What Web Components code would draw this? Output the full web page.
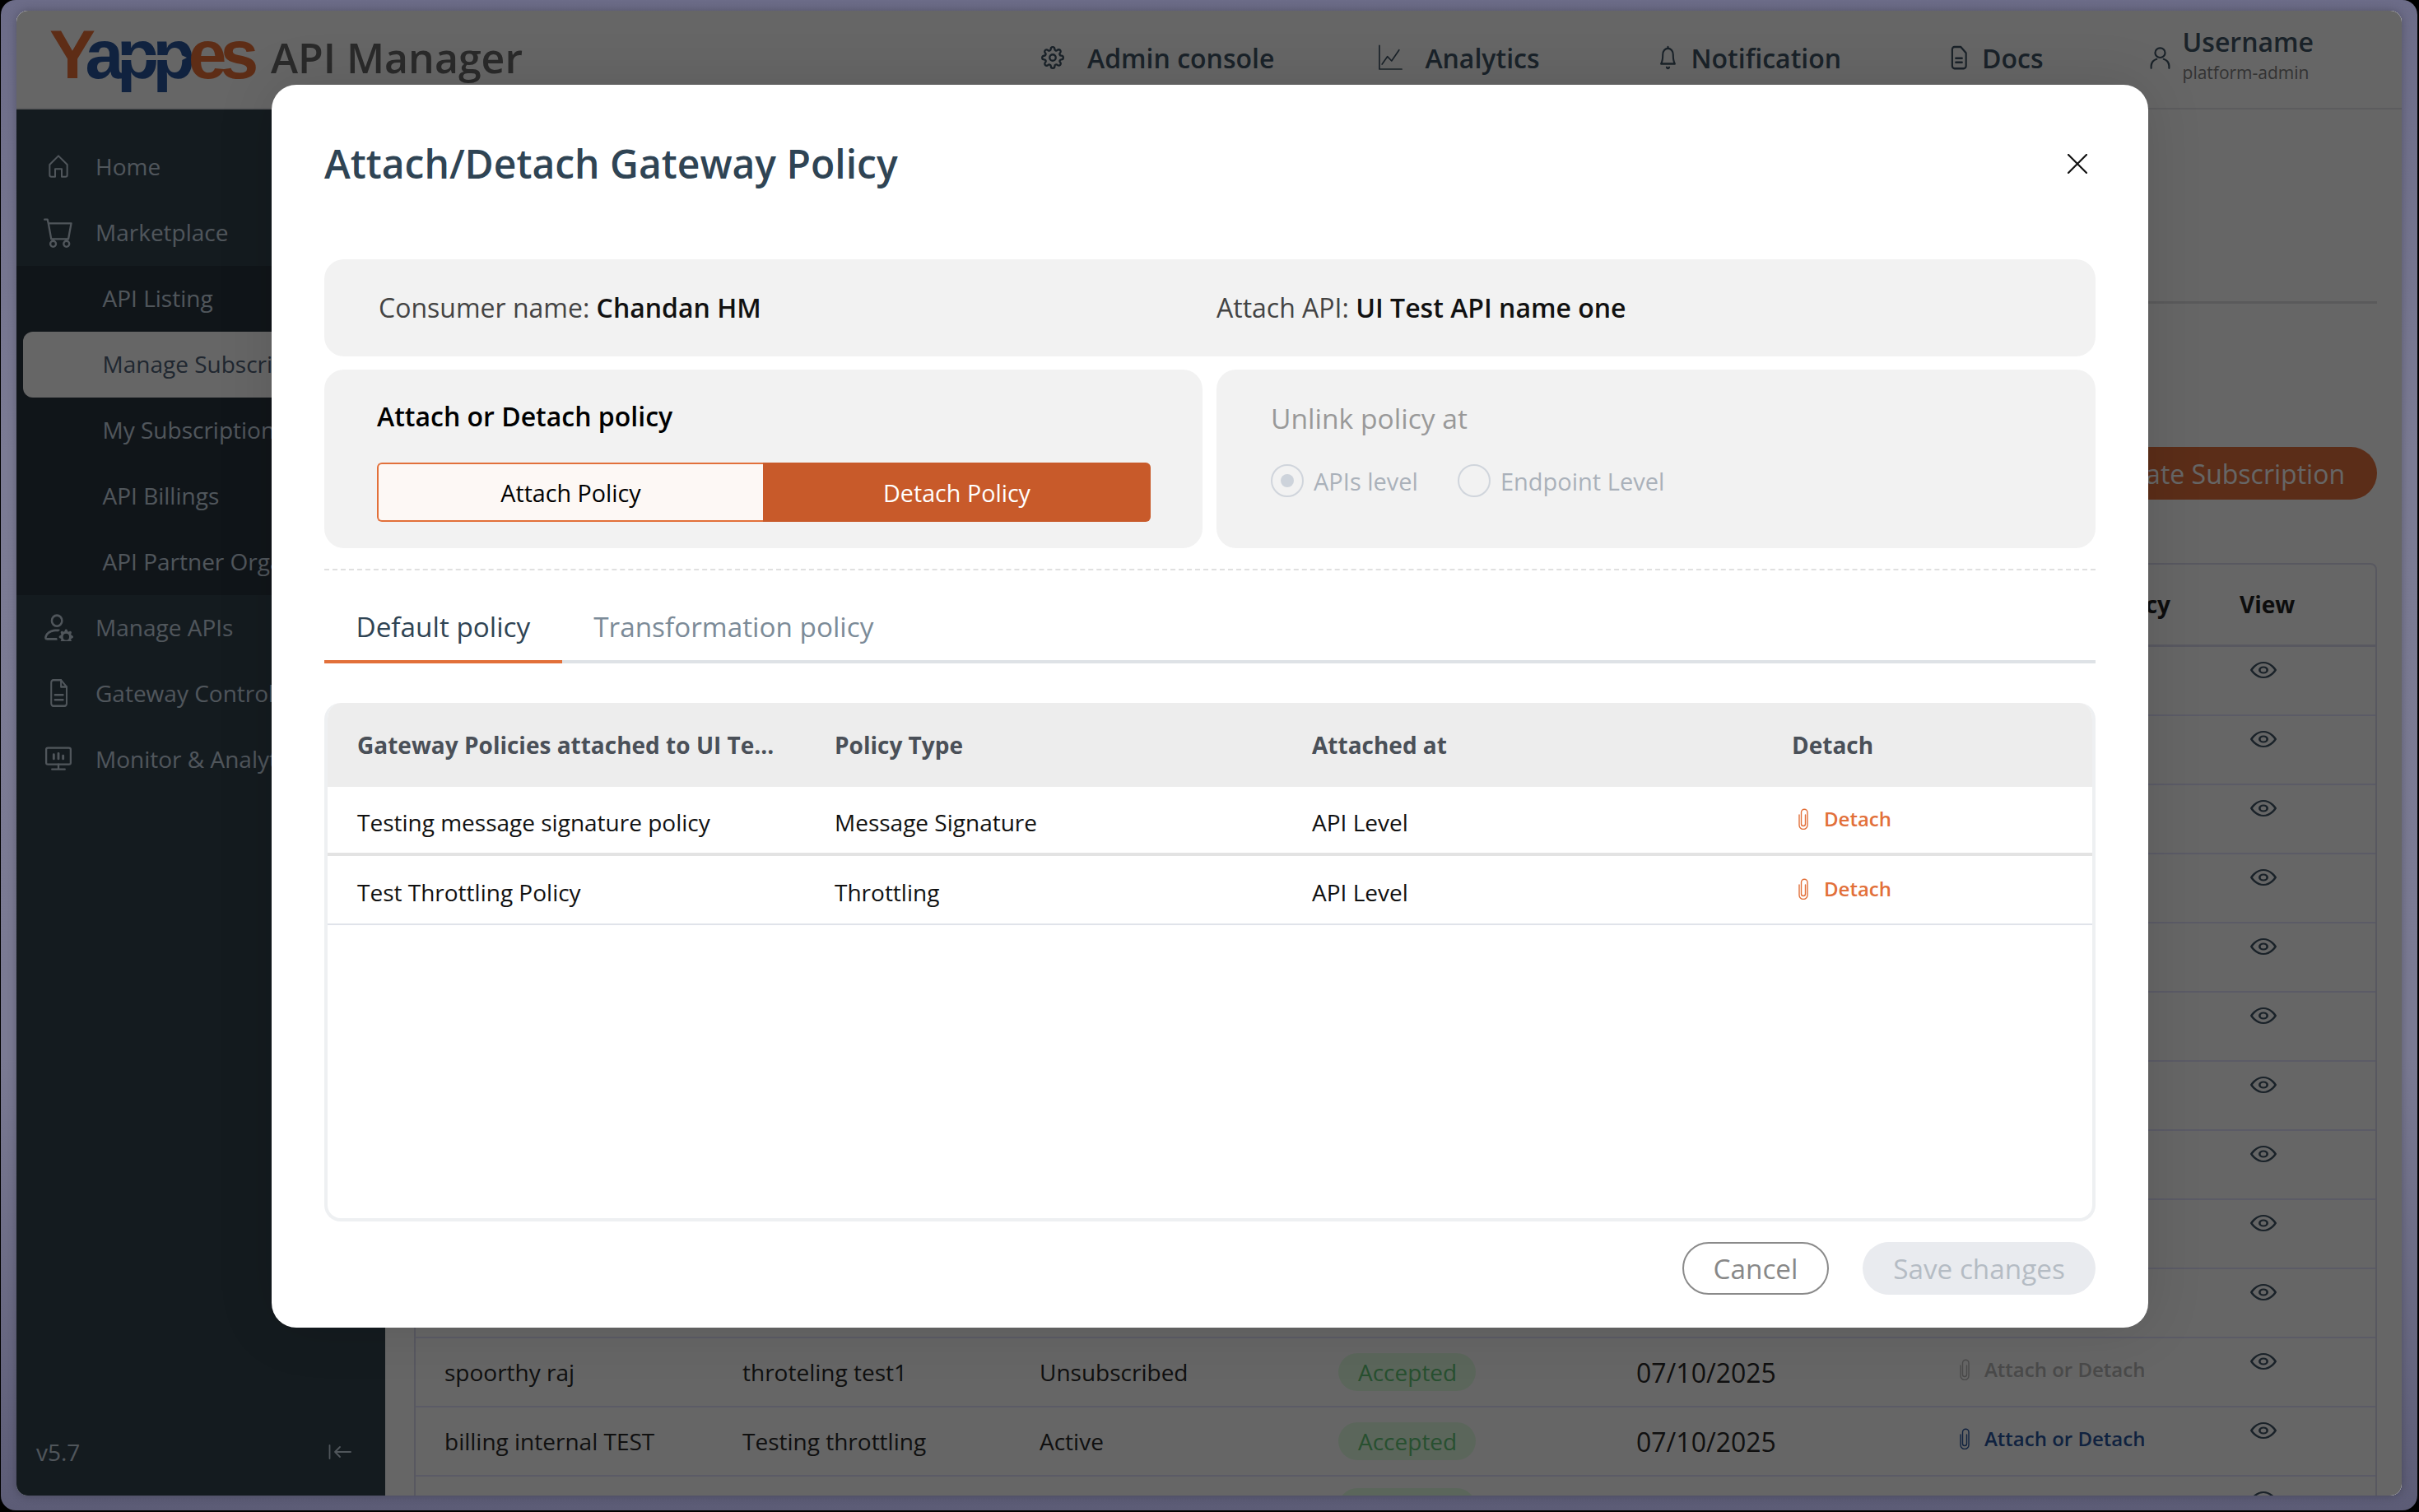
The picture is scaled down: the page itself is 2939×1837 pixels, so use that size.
<!DOCTYPE html>
<html>
<head>
<meta charset="utf-8">
<title>Yappes API Manager</title>
<style>
  html, body { margin: 0; padding: 0; background: #000; overflow: hidden; }
  body { font-family: "Open Sans", "Noto Sans", sans-serif; }
</style>
</head>
<body>
<app-frame>
  <app-topbar slot="top"></app-topbar>
  <side-nav slot="side"></side-nav>
  <subscription-page slot="main"></subscription-page>
  <policy-modal slot="modal"></policy-modal>
</app-frame>

<script>
const ICONS = {
  home: '<path fill="none" stroke="currentColor" stroke-width="1.5" stroke-linejoin="round" d="M4 10.5 12 2.5l8 8V20a1.5 1.5 0 0 1-1.5 1.5H15V14.5H9v7H5.5A1.5 1.5 0 0 1 4 20z"/>',
  cart: '<path fill="currentColor" d="M0 1.5A.5.5 0 0 1 .5 1H2a.5.5 0 0 1 .485.379L2.89 3H14.5a.5.5 0 0 1 .491.592l-1.5 8A.5.5 0 0 1 13 12H4a.5.5 0 0 1-.491-.408L2.01 3.607 1.61 2H.5a.5.5 0 0 1-.5-.5zM3.102 4l1.313 7h8.17l1.313-7H3.102zM5 12a2 2 0 1 0 0 4 2 2 0 0 0 0-4zm7 0a2 2 0 1 0 0 4 2 2 0 0 0 0-4zm-7 1a1 1 0 1 1 0 2 1 1 0 0 1 0-2zm7 0a1 1 0 1 1 0 2 1 1 0 0 1 0-2z"/>',
  persongear: '<path fill="currentColor" d="M11 5a3 3 0 1 1-6 0 3 3 0 0 1 6 0ZM8 7a2 2 0 1 0 0-4 2 2 0 0 0 0 4Zm.256 7a4.474 4.474 0 0 1-.229-1.004H3c.001-.246.154-.986.832-1.664C4.484 10.68 5.711 10 8 10c.26 0 .507.009.74.025.226-.341.496-.65.804-.918C9.077 9.038 8.564 9 8 9c-5 0-6 3-6 4s1 1 1 1h5.256Zm3.63-4.54c.18-.613 1.048-.613 1.229 0l.043.148a.64.64 0 0 0 .921.382l.136-.074c.561-.306 1.175.308.87.869l-.075.136a.64.64 0 0 0 .382.92l.149.045c.612.18.612 1.048 0 1.229l-.15.043a.64.64 0 0 0-.38.921l.074.136c.305.561-.309 1.175-.87.87l-.136-.075a.64.64 0 0 0-.92.382l-.045.149c-.18.612-1.048.612-1.229 0l-.043-.15a.64.64 0 0 0-.921-.38l-.136.074c-.561.305-1.175-.309-.87-.87l.075-.136a.64.64 0 0 0-.382-.92l-.148-.044c-.613-.181-.613-1.049 0-1.23l.148-.043a.64.64 0 0 0 .382-.921l-.074-.136c-.306-.561.308-1.175.869-.87l.136.075a.64.64 0 0 0 .92-.382l.045-.148ZM14 12.5a1.5 1.5 0 1 0-3 0 1.5 1.5 0 0 0 3 0Z"/>',
  file: '<g fill="none" stroke="currentColor" stroke-width="1.6" stroke-linecap="round" stroke-linejoin="round"><path d="M7 1.5h7.5L20 7v13.5a2 2 0 0 1-2 2H7a2 2 0 0 1-2-2v-17a2 2 0 0 1 2-2z"/><path d="M14.5 1.5V7H20"/><path d="M8.5 13.5h8M8.5 17.5h8"/></g>',
  monitor: '<g fill="none" stroke="currentColor" stroke-width="1.6" stroke-linecap="round" stroke-linejoin="round"><rect x="1.5" y="2" width="21" height="15" rx="1.5"/><path d="M12 17v4M6.5 21.5h11"/><path stroke-width="2" d="M8 8v4M12 7v5M16 9v3"/></g>',
  gear: '<g fill="none" stroke="currentColor" stroke-width="2" stroke-linecap="round" stroke-linejoin="round"><circle cx="12" cy="12" r="3.2"/><path d="M19.4 15a1.65 1.65 0 0 0 .33 1.82l.06.06a2 2 0 0 1 0 2.83 2 2 0 0 1-2.83 0l-.06-.06a1.65 1.65 0 0 0-1.82-.33 1.65 1.65 0 0 0-1 1.51V21a2 2 0 0 1-2 2 2 2 0 0 1-2-2v-.09A1.65 1.65 0 0 0 9 19.4a1.65 1.65 0 0 0-1.82.33l-.06.06a2 2 0 0 1-2.83 0 2 2 0 0 1 0-2.83l.06-.06a1.65 1.65 0 0 0 .33-1.82 1.65 1.65 0 0 0-1.51-1H3a2 2 0 0 1-2-2 2 2 0 0 1 2-2h.09A1.65 1.65 0 0 0 4.6 9a1.65 1.65 0 0 0-.33-1.82l-.06-.06a2 2 0 0 1 0-2.83 2 2 0 0 1 2.83 0l.06.06a1.65 1.65 0 0 0 1.82.33H9a1.65 1.65 0 0 0 1-1.51V3a2 2 0 0 1 2-2 2 2 0 0 1 2 2v.09a1.65 1.65 0 0 0 1 1.51 1.65 1.65 0 0 0 1.82-.33l.06-.06a2 2 0 0 1 2.83 0 2 2 0 0 1 0 2.83l-.06.06a1.65 1.65 0 0 0-.33 1.82V9a1.65 1.65 0 0 0 1.51 1H21a2 2 0 0 1 2 2 2 2 0 0 1-2 2h-.09a1.65 1.65 0 0 0-1.51 1z"/></g>',
  chart: '<g fill="none" stroke="currentColor" stroke-width="1.3" stroke-linecap="round" stroke-linejoin="round"><path d="M1.5 1v21.5h21"/><path d="M4 18l5-7 4 4 7-10"/></g>',
  bell: '<g fill="none" stroke="currentColor" stroke-width="2" stroke-linecap="round" stroke-linejoin="round"><path d="M18 9a6 6 0 0 0-12 0c0 6-2 9-2 9h16s-2-3-2-9"/><path d="M12 1.5V3M10.5 21.5a1.7 1.7 0 0 0 3 0"/></g>',
  doc: '<g fill="none" stroke="currentColor" stroke-width="2" stroke-linecap="round" stroke-linejoin="round"><path d="M7 1.5h7l6 6V20a2.5 2.5 0 0 1-2.5 2.5H7A2.5 2.5 0 0 1 4.5 20V4A2.5 2.5 0 0 1 7 1.5z"/><path d="M8.5 12.5h7M8.5 16.5h7"/></g>',
  user: '<g fill="none" stroke="currentColor" stroke-width="1.8" stroke-linecap="round" stroke-linejoin="round"><circle cx="12" cy="7" r="5"/><path d="M3 23v-2.5a8 8 0 0 1 5.5-7M21 23v-2.5a8 8 0 0 0-5.5-7"/></g>',
  eye: '<g fill="none" stroke="currentColor" stroke-width="2" stroke-linecap="round" stroke-linejoin="round"><path d="M1 12s4-9 11-9 11 9 11 9-4 9-11 9-11-9-11-9z"/><circle cx="12" cy="12" r="3.5"/></g>',
  clip: '<path fill="none" stroke="currentColor" stroke-width="1.4" stroke-linecap="round" d="M1 8v12.5a5 5 0 0 0 10 0V5a3.75 3.75 0 0 0-7.5 0v14a2.5 2.5 0 0 0 5 0V8"/>',
  collapse: '<g fill="none" stroke="currentColor" stroke-width="1.8" stroke-linecap="round" stroke-linejoin="round"><path d="M1.5 1v16M27 9H8M14 3 8 9l6 6"/></g>',
  close: '<path fill="none" stroke="currentColor" stroke-width="2.2" stroke-linecap="round" d="M1 1l22 22M23 1 1 23"/>'
};

function svgIcon(name, w, h, box) {
  return `<svg width="${w}" height="${h}" viewBox="${box || '0 0 24 24'}" preserveAspectRatio="none" style="display:block;flex:none">${ICONS[name]}</svg>`;
}

class AppFrame extends HTMLElement {
  constructor() {
    super();
    this.root = this.attachShadow({ mode: 'open' });
    this.root.innerHTML = `<style>
      :host {
        display: block;
        box-sizing: border-box;
        width: 2936px;
        height: 1835px;
        margin-left: 1px;
        padding: 13px 19px 18px 19px;
        border-radius: 18px;
        background: linear-gradient(180deg, #6c6c88 0%, #7b7b94 30%, #7a7a93 70%, #5c5c76 100%);
      }
      #window {
        position: relative;
        width: 2898px;
        height: 1804px;
        overflow: hidden;
        border-radius: 14px;
        display: grid;
        grid-template-columns: 448px 1fr;
        grid-template-rows: 120px 1fr;
        box-shadow: 0 0 12px rgba(0,0,0,.25);
        background: #fff;
      }
      #top { grid-column: 1 / 3; }
      #backdrop { position: absolute; inset: 0; background: rgba(0,0,0,.6); }
      </style>
      <div id="window">
        <div id="top"><slot name="top"></slot></div>
        <slot name="side"></slot>
        <slot name="main"></slot>
        <div id="backdrop"></div>
        <slot name="modal"></slot>
      </div>`;
  }
}
customElements.define('app-frame', AppFrame);

class TopLink extends HTMLElement {
  constructor() {
    super();
    this.root = this.attachShadow({ mode: 'open' });
    this.root.innerHTML = `<style>
      :host { display: flex; align-items: center; color: #415566; font-size: 32px; font-weight: 600; white-space: nowrap; }
      </style>
      <slot name="icon"></slot><span id="gap"></span><slot></slot>`;
  }
  connectedCallback() {
    this.root.querySelector('#gap').style.width = (this.getAttribute('gap') || 16) + 'px';
  }
}
customElements.define('top-link', TopLink);

class AppTopbar extends HTMLElement {
  constructor() {
    super();
    this.root = this.attachShadow({ mode: 'open' });
    this.root.innerHTML = `<style>
      :host {
        display: flex;
        align-items: center;
        box-sizing: border-box;
        height: 120px;
        border-bottom: 2px solid #e6e6ea;
        background: #fff;
      }
      #logo {
        position: relative;
        margin: 0 0 12px 40px;
        width: 250px;
        height: 78px;
        font-family: "Liberation Sans", Arial, sans-serif;
        font-weight: 700;
        font-size: 84px;
        line-height: 78px;
        letter-spacing: -8px;
        white-space: nowrap;
        color: #eb7139;
      }
      #logo b { color: #28569f; font-weight: 700; }
      #logo svg { position: absolute; left: 0; top: 0; }
      #name {
        margin: 0 0 4px 19px;
        color: #696969;
        font-size: 50px;
        font-weight: 600;
        white-space: nowrap;
        line-height: 66px;
      }
      #links { display: flex; align-items: center; margin: 0 0 4px 630px; }
      #user { padding-bottom: 8px; }
      #user div:first-child { line-height: 44px; }
      #user div:last-child { font-size: 21px; line-height: 30px; font-weight: 500; color: #808080; }
      </style>
      <div id="logo">Y<b>app</b>es<svg width="250" height="78" viewBox="0 0 250 78"><path fill="#fff" d="M87 40h66v6H87z"/><path fill="#fff" d="M150 35l17 8-17 9z"/></svg></div>
      <div id="name">API Manager</div>
      <div id="links">
        <top-link gap="28"><span slot="icon">${svgIcon('gear', 28, 28)}</span>Admin console</top-link>
        <top-link gap="26" style="margin-left:126px"><span slot="icon">${svgIcon('chart', 31, 32)}</span>Analytics</top-link>
        <top-link gap="16" style="margin-left:143px"><span slot="icon">${svgIcon('bell', 25, 30)}</span>Notification</top-link>
        <top-link gap="15" style="margin-left:130px"><span slot="icon">${svgIcon('doc', 26, 30)}</span>Docs</top-link>
        <top-link gap="13" style="margin-left:127px"><span slot="icon">${svgIcon('user', 29, 28)}</span><div id="user"><div>Username</div><div>platform-admin</div></div></top-link>
      </div>`;
  }
}
customElements.define('app-topbar', AppTopbar);

class NavItem extends HTMLElement {
  constructor() {
    super();
    this.root = this.attachShadow({ mode: 'open' });
    this.root.innerHTML = `<style>
      :host {
        display: flex;
        align-items: center;
        box-sizing: border-box;
        height: 80px;
        padding-bottom: 2px;
        font-size: 28px;
        color: #c8d7e4;
        white-space: nowrap;
      }
      :host([sub]) { padding-left: 104.5px; }
      :host([active]) { margin-left: 8px; padding-left: 96.5px; background: #fff; border-radius: 12px; color: #506278; }
      #icon { width: 96px; display: flex; justify-content: center; box-sizing: border-box; padding-left: 6px; }
      :host([sub]) #icon { display: none; }
      </style>
      <span id="icon"><slot name="icon"></slot></span><slot></slot>`;
  }
}
customElements.define('nav-item', NavItem);

class SideNav extends HTMLElement {
  constructor() {
    super();
    this.root = this.attachShadow({ mode: 'open' });
    this.root.innerHTML = `<style>
      :host {
        display: flex;
        flex-direction: column;
        background: #33444f;
        padding-top: 30px;
        overflow: hidden;
      }
      #sub { background: #2a3540; }
      #foot {
        margin-top: auto;
        display: flex;
        align-items: center;
        justify-content: space-between;
        padding: 0 41px 34px 24px;
        font-size: 28px;
        line-height: 38px;
        color: #c8d7e4;
      }
      nav-item svg { color: #c8d7e4; }
      </style>
      <nav-item><span slot="icon">${svgIcon('home', 32, 32)}</span>Home</nav-item>
      <nav-item><span slot="icon">${svgIcon('cart', 37, 38, '0 0 16 16')}</span>Marketplace</nav-item>
      <div id="sub">
        <nav-item sub>API Listing</nav-item>
        <nav-item sub active>Manage Subscriptions</nav-item>
        <nav-item sub>My Subscriptions</nav-item>
        <nav-item sub>API Billings</nav-item>
        <nav-item sub>API Partner Organizations</nav-item>
      </div>
      <nav-item><span slot="icon">${svgIcon('persongear', 36, 34, '1.5 1.5 14.5 13')}</span>Manage APIs</nav-item>
      <nav-item><span slot="icon">${svgIcon('file', 30, 36)}</span>Gateway Controls</nav-item>
      <nav-item><span slot="icon">${svgIcon('monitor', 34, 32)}</span>Monitor &amp; Analytics</nav-item>
      <div id="foot"><span>v5.7</span>${svgIcon('collapse', 28, 18, '0 0 28 18')}</div>`;
  }
}
customElements.define('side-nav', SideNav);

class SubscriptionRow extends HTMLElement {
  constructor() {
    super();
    this.root = this.attachShadow({ mode: 'open' });
    const g = n => this.getAttribute(n) || '';
    const link = g('link');
    this.root.innerHTML = `<style>
      :host {
        display: grid;
        grid-template-columns: 362px 361px 363px 362px 388px 346px 1fr;
        align-items: center;
        box-sizing: border-box;
        height: 84px;
        padding: 0 0 0 35px;
        border-bottom: 2px solid #e4e4ff;
        font-size: 28px;
        color: #2a2a2a;
        white-space: nowrap;
      }
      #pill {
        display: inline-flex;
        align-items: center;
        box-sizing: border-box;
        width: 167px;
        height: 46px;
        padding-left: 24px;
        border-radius: 23px;
        background: #e4ffe4;
        color: #64c878;
      }
      #date { font-size: 32px; }
      #link { display: flex; align-items: center; gap: 18px; margin: 0 0 7px 5px; font-size: 24px; font-weight: 600; }
      #eye { margin: 0 0 27px 12px; color: #415566; }
      </style>
      <span>${g('consumer')}</span>
      <span>${g('api')}</span>
      <span>${g('status')}</span>
      <span>${this.hasAttribute('pill') ? `<span id="pill">${g('pill')}</span>` : ''}</span>
      <span id="date">${g('date')}</span>
      <span>${link ? `<span id="link" style="color:${g('link-color')}">${svgIcon('clip', 12, 26, '0 0 12 26')}${link}</span>` : ''}</span>
      <span id="eye">${svgIcon('eye', 32, 24)}</span>`;
  }
}
customElements.define('subscription-row', SubscriptionRow);

class SubscriptionPage extends HTMLElement {
  constructor() {
    super();
    this.root = this.attachShadow({ mode: 'open' });
    this.root.innerHTML = `<style>
      :host {
        display: block;
        box-sizing: border-box;
        padding: 0 30px 0 35px;
        overflow: hidden;
        background: #fff;
        height: 1684px;
      }
      #tabs { height: 233px; border-bottom: 3px solid #e0e0e4; }
      #actions { display: flex; justify-content: flex-end; margin-top: 174px; }
      button {
        height: 64px;
        padding: 0 39px;
        border: 0;
        border-radius: 32px;
        background: #e4703c;
        color: #fff;
        font: 500 32px "Open Sans", sans-serif;
      }
      #table { margin-top: 77px; border: 2px solid #dcdcf0; border-bottom: 0; border-radius: 8px 8px 0 0; }
      #head {
        display: grid;
        grid-template-columns: 1447px 1fr 165px;
        box-sizing: content-box;
        height: 95px;
        padding: 0 0 2px 33px;
        align-items: center;
        border-bottom: 3px solid #dcdcf0;
        font-size: 28px;
        font-weight: 700;
        color: #222;
      }
      #head span { text-align: right; }
      </style>
      <div id="tabs"></div>
      <div id="actions"><button>Create Subscription</button></div>
      <div id="table">
        <div id="head"><span></span><span style="margin-right:84px">Policy</span><span style="text-align:left">View</span></div>
        <div id="rows"></div>
      </div>`;
    let rows = '';
    for (let i = 0; i < 10; i++) rows += '<subscription-row></subscription-row>';
    rows += '<subscription-row consumer="spoorthy raj" api="throteling test1" status="Unsubscribed" pill="Accepted" date="07/10/2025" link="Attach or Detach" link-color="#b8b8b8"></subscription-row>';
    rows += '<subscription-row consumer="billing internal TEST" api="Testing throttling" status="Active" pill="Accepted" date="07/10/2025" link="Attach or Detach" link-color="#28569f"></subscription-row>';
    rows += '<subscription-row pill=""></subscription-row>';
    this.root.querySelector('#rows').innerHTML = rows;
  }
}
customElements.define('subscription-page', SubscriptionPage);

class RadioOption extends HTMLElement {
  constructor() {
    super();
    this.root = this.attachShadow({ mode: 'open' });
    this.root.innerHTML = `<style>
      :host { display: flex; align-items: center; gap: 12px; font-size: 29px; color: #aab1ba; white-space: nowrap; }
      #dot { box-sizing: border-box; width: 40px; height: 40px; border: 2px solid #d0d5dc; border-radius: 50%; display: flex; align-items: center; justify-content: center; }
      :host([checked]) #dot::after { content: ""; width: 16px; height: 16px; border-radius: 50%; background: #cdd3db; }
      </style>
      <span id="dot"></span><slot></slot>`;
  }
}
customElements.define('radio-option', RadioOption);

class PolicyTable extends HTMLElement {
  constructor() {
    super();
    this.root = this.attachShadow({ mode: 'open' });
    const detach = `<span class="detach">${svgIcon('clip', 12, 26, '0 0 12 26')}Detach</span>`;
    this.root.innerHTML = `<style>
      :host {
        display: block;
        box-sizing: border-box;
        height: 630px;
        border: 4px solid #eef0f2;
        border-top: 0;
        border-radius: 20px;
        overflow: hidden;
        font-size: 28px;
        color: #111;
      }
      .row {
        display: grid;
        grid-template-columns: 580px 580px 583px 1fr;
        align-items: center;
        box-sizing: border-box;
        padding-left: 36px;
        height: 84px;
        border-bottom: 4px solid #e3e3e3;
        white-space: nowrap;
      }
      .row > span { padding-top: 5px; }
      .row:last-child { border-bottom-width: 2px; border-bottom-color: #e0e3ea; }
      #head {
        height: 102px;
        border: 0;
        background: #ededed;
        margin: 0 -4px;
        padding-left: 40px;
        font-weight: 700;
        color: #4a5058;
      }
      #head span { padding: 0; }
      .row > span.detach {
        display: flex;
        align-items: center;
        gap: 19px;
        padding: 0 0 3px 8px;
        color: #e2703a;
        font-size: 24px;
        font-weight: 600;
      }
      </style>
      <div class="row" id="head"><span>Gateway Policies attached to UI Te...</span><span>Policy Type</span><span>Attached at</span><span>Detach</span></div>
      <div class="row"><span>Testing message signature policy</span><span>Message Signature</span><span>API Level</span>${detach}</div>
      <div class="row"><span>Test Throttling Policy</span><span>Throttling</span><span>API Level</span>${detach}</div>`;
  }
}
customElements.define('policy-table', PolicyTable);

class PolicyModal extends HTMLElement {
  constructor() {
    super();
    this.root = this.attachShadow({ mode: 'open' });
    this.root.innerHTML = `<style>
      :host {
        position: absolute;
        left: 310px;
        top: 90px;
        width: 2280px;
        height: 1510px;
        box-sizing: border-box;
        padding: 64px 64px 0 64px;
        background: #fff;
        border-radius: 30px;
        box-shadow: 0 0 70px rgba(0,0,0,.12);
        color: #444;
        display: flex;
        flex-direction: column;
      }
      #head { display: flex; align-items: center; justify-content: space-between; height: 66px; margin-bottom: 82px; }
      h2 { margin: 0 0 2px; font-size: 48px; font-weight: 600; line-height: 66px; color: #2f4454; white-space: nowrap; }
      #close { color: #111; margin: 0 10px 2px 0; }
      .box { background: #f2f2f2; border-radius: 24px; box-sizing: border-box; }
      #info { display: grid; grid-template-columns: 1018px 1fr; align-items: center; height: 118px; padding: 0 0 1px 66px; font-size: 32px; }
      #info b { font-weight: 600; color: #111; }
      #panels { display: grid; grid-template-columns: 1067px 1068px; gap: 17px; margin-top: 16px; height: 217px; }
      #attach { padding: 35px 64px 0 64px; }
      #attach h3, #unlink h3 { margin: 0; font-size: 32px; line-height: 44px; font-weight: 600; color: #000; white-space: nowrap; }
      #seg { display: grid; grid-template-columns: 469px 471px; margin-top: 34px; height: 72px; font-size: 28.7px; }
      #seg span { display: flex; align-items: center; justify-content: center; box-sizing: border-box; }
      #seg .off { background: #fdf8f5; border: 2px solid #e2703a; border-right: 0; border-radius: 6px 0 0 6px; color: #000; }
      #seg .on { background: #c85a2a; color: #fff; font-weight: 500; border-radius: 0 6px 6px 0; }
      #unlink { padding: 37px 67px 0 66px; }
      #unlink h3 { color: #999; font-weight: 500; font-size: 33.6px; }
      #radios { display: flex; gap: 48px; margin-top: 34px; }
      #dash { margin-top: 25px; height: 0; border-top: 2px dashed #e0e0e0; }
      #tabs { display: flex; border-bottom: 4px solid #dee2e6; height: 113px; box-sizing: border-box; }
      .tab { box-sizing: border-box; height: 113px; padding: 43px 38.5px 0; font-size: 33.3px; line-height: 50px; font-weight: 500; color: #7c8b98; white-space: nowrap; }
      .tab.on { color: #2f4454; border-bottom: 4px solid #e2703a; }
      policy-table { margin-top: 48px; }
      #foot { display: flex; justify-content: flex-end; gap: 41px; margin-top: 25px; }
      .btn { display: flex; align-items: center; justify-content: center; box-sizing: border-box; height: 64px; border-radius: 32px; font-size: 33.3px; font-weight: 500; white-space: nowrap; }
      #cancel { width: 178px; border: 2px solid #8a8a8a; color: #888; }
      #save { width: 283px; background: #e9ebef; color: #b5bcc4; }
      </style>
      <div id="head"><h2>Attach/Detach Gateway Policy</h2><span id="close">${svgIcon('close', 24, 24)}</span></div>
      <div class="box" id="info"><span>Consumer name: <b>Chandan HM</b></span><span>Attach API: <b>UI Test API name one</b></span></div>
      <div id="panels">
        <div class="box" id="attach">
          <h3>Attach or Detach policy</h3>
          <div id="seg"><span class="off">Attach Policy</span><span class="on">Detach Policy</span></div>
        </div>
        <div class="box" id="unlink">
          <h3>Unlink policy at</h3>
          <div id="radios"><radio-option checked>APIs level</radio-option><radio-option>Endpoint Level</radio-option></div>
        </div>
      </div>
      <div id="dash"></div>
      <div id="tabs"><div class="tab on">Default policy</div><div class="tab">Transformation policy</div></div>
      <policy-table></policy-table>
      <div id="foot"><div class="btn" id="cancel">Cancel</div><div class="btn" id="save">Save changes</div></div>`;
  }
}
customElements.define('policy-modal', PolicyModal);
</script>
</body>
</html>
